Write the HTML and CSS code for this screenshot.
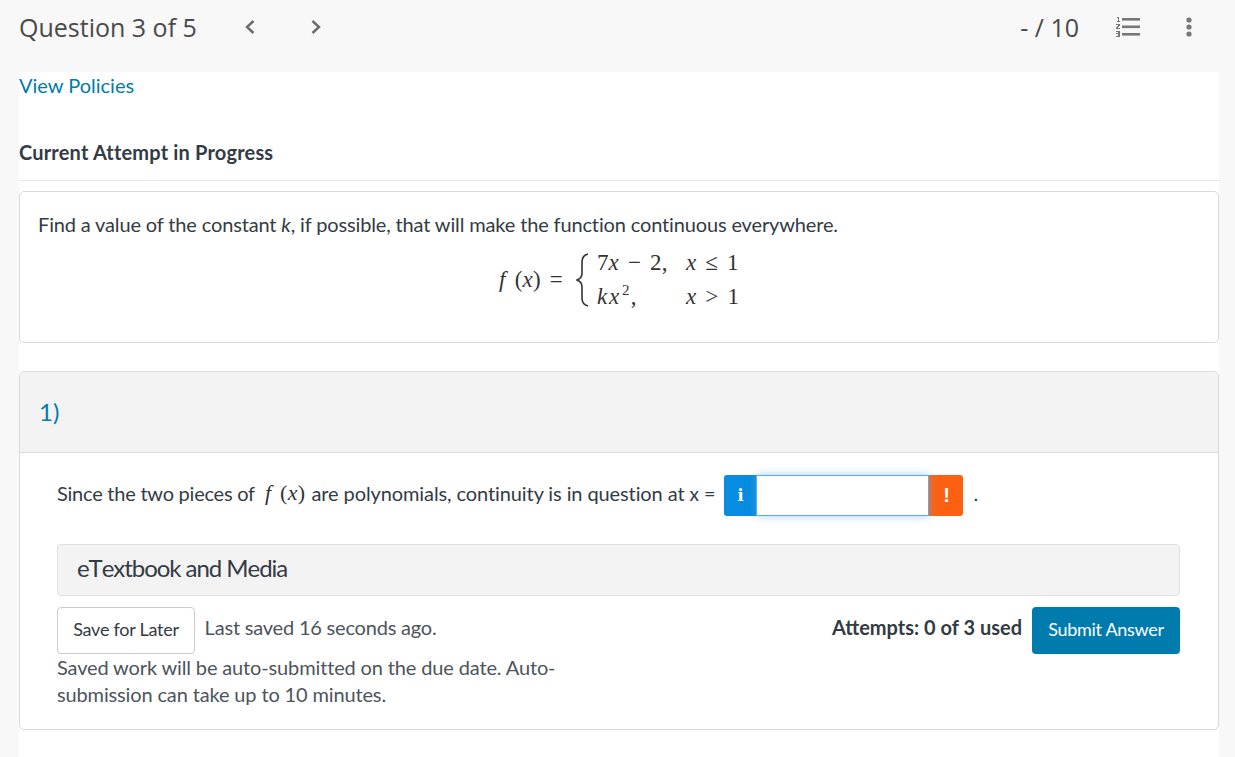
FILE: index.html
```html
<!DOCTYPE html>
<html lang="en">
<head>
  <meta charset="UTF-8">
  <title>Question 3 of 5</title>
  <link rel="stylesheet" href="styles.css">
</head>
<body>

  <header class="top-bar">
    <h1 class="question-title">Question 3 of 5</h1>
    <button class="nav-button nav-prev" aria-label="Previous">
      <svg width="12" height="16" viewBox="0 0 12 16"><path d="M9.5 2 L3 8 L9.5 14" fill="none" stroke="#6b6b6b" stroke-width="2.4"/></svg>
    </button>
    <button class="nav-button nav-next" aria-label="Next">
      <svg width="12" height="16" viewBox="0 0 12 16"><path d="M2.5 2 L9 8 L2.5 14" fill="none" stroke="#6b6b6b" stroke-width="2.4"/></svg>
    </button>
    <div class="score">- / 10</div>
    <svg class="list-icon" width="26" height="22" viewBox="0 0 26 22" aria-label="Question list">
      <g fill="#777">
        <rect x="2" y="1" width="2" height="1"/><rect x="3" y="1" width="1" height="5"/><rect x="2" y="5" width="3" height="1"/>
        <rect x="1" y="8" width="4" height="1"/><rect x="3" y="9" width="2" height="1"/><rect x="2" y="10" width="2" height="1"/><rect x="1" y="11" width="2" height="1"/><rect x="1" y="12" width="4" height="1"/>
        <rect x="1" y="15" width="4" height="1"/><rect x="3" y="16" width="2" height="4"/><rect x="1" y="17" width="3" height="1"/><rect x="1" y="20" width="4" height="1"/>
        <rect x="7" y="2" width="18" height="2.6"/><rect x="7" y="9.5" width="18" height="2.6"/><rect x="7" y="17" width="18" height="2.6"/>
      </g>
    </svg>
    <svg class="more-icon" width="8" height="22" viewBox="0 0 8 22" aria-label="More">
      <g fill="#777"><circle cx="4" cy="4" r="2.6"/><circle cx="4" cy="11" r="2.6"/><circle cx="4" cy="18" r="2.6"/></g>
    </svg>
  </header>

  <main class="page">
    <a class="policies-link" href="#">View Policies</a>
    <h2 class="attempt-heading">Current Attempt in Progress</h2>

    <section class="card question-card">
      <p class="question-text">Find a value of the constant <i>k</i>, if possible, that will make the function continuous everywhere.</p>
      <div class="equation">
        <span class="math eq-left"><i>f</i> (<i>x</i>) =</span>
        <svg class="brace" width="13" height="54" viewBox="0 0 13 54"><path d="M12 1 C8 2 6 4 6 9 L6 20 C6 24 4 26 1 27 C4 28 6 30 6 34 L6 45 C6 50 8 52 12 53" fill="none" stroke="#333" stroke-width="1.6"/></svg>
        <div class="math cases">
          <span>7<i>x</i> − 2,</span><span><i>x</i> ≤ 1</span>
          <span><i class="kx">kx</i><sup>2</sup>,</span><span><i>x</i> &gt; 1</span>
        </div>
      </div>
    </section>

    <section class="card part-card">
      <div class="part-header">1)</div>
      <div class="part-body">
        <div class="answer-line">
          <span class="lead-text">Since the two pieces of</span>
          <span class="math inline-math"><i>f</i> (<i>x</i>)</span>
          <span>are polynomials, continuity is in question at <span class="var">x</span> =</span>
          <div class="answer-group">
            <div class="addon addon-info">i</div>
            <input class="answer-input" type="text">
            <div class="addon addon-warn">!</div>
          </div>
          <span class="period">.</span>
        </div>

        <div class="textbook-bar">eTextbook and Media</div>

        <div class="actions">
          <div class="save-area">
            <button class="save-button">Save for Later</button>
            <span class="saved-note">Last saved 16 seconds ago.</span>
            <p class="auto-note">Saved work will be auto-submitted on the due date. Auto-submission can take up to 10 minutes.</p>
          </div>
          <div class="submit-area">
            <span class="attempts">Attempts: 0 of 3 used</span>
            <button class="submit-button">Submit Answer</button>
          </div>
        </div>
      </div>
    </section>
  </main>

</body>
</html>
```

FILE: styles.css
```css
body {
  margin: 0;
  height: 757px;
  overflow: hidden;
  background-color: #f8f8f8;
  font-family: Lato, Arial, sans-serif;
  font-size: 18px;
  color: #333b44;
}

.top-bar {
  display: flex;
  align-items: center;
  height: 72px;
  padding: 0 42px 18px 19px;
  box-sizing: border-box;
}

.question-title {
  margin: 0;
  width: 225px;
  font-family: "Open Sans", sans-serif;
  font-size: 25px;
  font-weight: 400;
  color: #4a4a4a;
}

.nav-button {
  display: flex;
  padding: 0;
  border: none;
  background: none;
}

.nav-prev {
  width: 66px;
}

.score {
  margin-left: auto;
  margin-right: 36px;
  font-family: "Open Sans", sans-serif;
  font-size: 25px;
  color: #4a4a4a;
}

.list-icon {
  margin-right: 44px;
}

.page {
  width: 1200px;
  height: 685px;
  margin-left: 19px;
  background-color: #fff;
}

.policies-link {
  display: block;
  line-height: 27px;
  font-size: 20px;
  color: #007bad;
  text-decoration: none;
}

.attempt-heading {
  margin: 0 0 10px;
  padding: 40px 0 15px;
  border-bottom: 1px solid #e8e8e8;
  font-size: 20px;
  line-height: 26px;
  font-weight: 700;
  letter-spacing: 0.18px;
  color: #333b44;
}

.card {
  border: 1px solid #dadada;
  border-radius: 5px;
  background-color: #fff;
}

.question-card {
  height: 152px;
  box-sizing: border-box;
  padding: 18px 19px 19px 18px;
  margin-bottom: 28px;
}

.question-text {
  margin: 0;
  font-size: 20px;
  line-height: 28px;
  letter-spacing: -0.145px;
}

.equation {
  display: flex;
  align-items: center;
  justify-content: center;
  padding: 8px 0 0 4px;
}

.math {
  font-family: "Liberation Serif", serif;
  font-size: 23px;
  letter-spacing: 0.2px;
  word-spacing: 3px;
  color: #333;
}

.eq-left {
  margin-right: 13px;
  white-space: pre;
}

.brace {
  margin-right: 8px;
}

.cases {
  display: grid;
  grid-template-columns: 89px 56px;
  grid-auto-rows: 34px;
  align-items: center;
}

.cases sup {
  font-size: 15px;
  line-height: 0;
  margin-left: 1px;
  margin-right: 1px;
}

.kx {
  letter-spacing: 1.8px;
}

.part-card {
  height: 359px;
  box-sizing: border-box;
}

.part-header {
  height: 80px;
  padding-left: 19px;
  border-bottom: 1px solid #dadada;
  border-radius: 5px 5px 0 0;
  background-color: #f3f3f3;
  line-height: 80px;
  font-size: 24px;
  color: #007bad;
}

.part-body {
  padding: 22px 38px 0 37px;
}

.answer-line {
  display: flex;
  align-items: center;
  gap: 5px;
  font-size: 20px;
  height: 41px;
  letter-spacing: -0.1px;
}

.answer-line > span {
  padding-bottom: 6px;
}

.answer-line > .lead-text {
  letter-spacing: -0.24px;
}

.answer-line > .inline-math {
  margin: 0 1px 0 5px;
  font-size: 22px;
  letter-spacing: 0.3px;
}

.var {
  font-size: 19px;
}

.answer-group {
  display: flex;
  margin-left: 4px;
  height: 41px;
}

.addon {
  width: 32px;
  color: #fff;
  text-align: center;
  font-family: "DejaVu Serif", serif;
  font-weight: 700;
  font-size: 16px;
  line-height: 41px;
}

.addon-info {
  border-radius: 3px 0 0 3px;
  background-color: #078ce0;
}

.addon-warn {
  width: 34px;
  border-radius: 0 3px 3px 0;
  background: linear-gradient(to right, #e0703a, #fd6011 25%);
  font-family: "Liberation Sans", sans-serif;
  font-size: 20px;
}

.answer-input {
  width: 173px;
  height: 41px;
  box-sizing: border-box;
  border: 1px solid #5aa9ea;
  outline: none;
  box-shadow: 0 0 8px rgba(90, 170, 235, 0.55);
  background-color: #fff;
}

.period {
  margin-left: 5px;
}

.textbook-bar {
  height: 52px;
  box-sizing: border-box;
  margin-top: 28px;
  padding-left: 19px;
  border: 1px solid #e0e0e0;
  border-radius: 4px;
  background-color: #f3f3f3;
  line-height: 45px;
  font-size: 24px;
  font-kerning: none;
  letter-spacing: -1.05px;
}

.actions {
  display: flex;
  justify-content: space-between;
  margin-top: 11px;
}

.save-area {
  width: 510px;
}

.save-button {
  height: 47px;
  width: 138px;
  margin-right: 5px;
  padding: 0 0 4px;
  border: 1px solid #ccc;
  border-radius: 4px;
  background-color: #fff;
  font-family: Lato, Arial, sans-serif;
  font-size: 18px;
  letter-spacing: -0.25px;
  color: #333b44;
}

.saved-note {
  font-size: 20px;
  letter-spacing: -0.2px;
  color: #4d545c;
  vertical-align: 1px;
}

.auto-note {
  margin: 0;
  font-size: 20px;
  line-height: 26.6px;
  letter-spacing: -0.14px;
  color: #4d545c;
}

.submit-area {
  display: flex;
  gap: 10px;
  align-items: flex-start;
}

.attempts {
  font-weight: 700;
  font-size: 20px;
  line-height: 40px;
}

.submit-button {
  width: 148px;
  height: 47px;
  padding: 0 0 4px;
  border: none;
  border-radius: 4px;
  background-color: #007bad;
  color: #fff;
  font-family: Lato, Arial, sans-serif;
  font-size: 18px;
  letter-spacing: -0.3px;
}
```
